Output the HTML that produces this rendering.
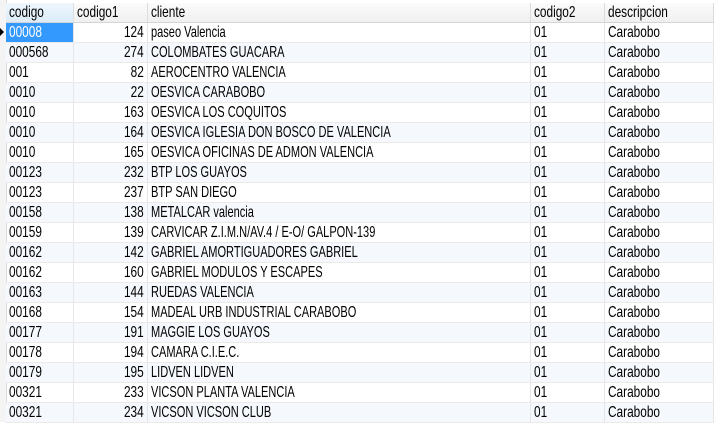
<html><head><style>
body{margin:0;width:726px;height:427px;background:#fff;font-family:"Liberation Sans",sans-serif;font-size:11.5px;color:#000;overflow:hidden;position:relative}
table{position:absolute;left:6px;top:3px;border-collapse:collapse;table-layout:fixed}
td,th{height:19px;padding:0 3px;border-right:1px solid #e6e6e6;border-bottom:1px solid #eaeaea;white-space:nowrap;overflow:hidden;line-height:19px}
th{font-weight:normal;text-align:left;background:linear-gradient(#fbfbfb,#f0f0f0);border-bottom:1px solid #d5d5d5;border-right:1px solid #dcdcdc;height:18px}
th.sel{background:linear-gradient(#eef7fd,#dcecf8)}
tr:nth-child(odd) td{background:#f5f8fc}
td.r{text-align:right}
td.s{background:#3399ff!important;color:#fff}
span{display:inline-block;transform:scaleX(.74);transform-origin:left center}
td:nth-child(3) span{transform:scaleX(.69)}
td.r span{transform-origin:right center}
.ind{position:absolute;left:0;top:0;width:6px;height:422px;background:#f4f4f4;border-right:1px solid #dcdcdc}
.arr{position:absolute;left:0;top:28px;width:0;height:0;border-left:4px solid #000;border-top:4px solid transparent;border-bottom:4px solid transparent}
</style></head><body>
<div class="ind"></div><div class="arr"></div>
<table>
<colgroup><col style="width:67px"><col style="width:74px"><col style="width:383px"><col style="width:74px"><col style="width:109px"></colgroup>
<tr><th class="sel"><span>codigo</span></th><th><span>codigo1</span></th><th><span>cliente</span></th><th><span>codigo2</span></th><th><span>descripcion</span></th></tr>
<tr><td class="s"><span>00008</span></td><td class="r"><span>124</span></td><td><span>paseo Valencia</span></td><td><span>01</span></td><td><span>Carabobo</span></td></tr>
<tr><td><span>000568</span></td><td class="r"><span>274</span></td><td><span>COLOMBATES GUACARA</span></td><td><span>01</span></td><td><span>Carabobo</span></td></tr>
<tr><td><span>001</span></td><td class="r"><span>82</span></td><td><span>AEROCENTRO VALENCIA</span></td><td><span>01</span></td><td><span>Carabobo</span></td></tr>
<tr><td><span>0010</span></td><td class="r"><span>22</span></td><td><span>OESVICA CARABOBO</span></td><td><span>01</span></td><td><span>Carabobo</span></td></tr>
<tr><td><span>0010</span></td><td class="r"><span>163</span></td><td><span>OESVICA LOS COQUITOS</span></td><td><span>01</span></td><td><span>Carabobo</span></td></tr>
<tr><td><span>0010</span></td><td class="r"><span>164</span></td><td><span>OESVICA IGLESIA DON BOSCO DE VALENCIA</span></td><td><span>01</span></td><td><span>Carabobo</span></td></tr>
<tr><td><span>0010</span></td><td class="r"><span>165</span></td><td><span>OESVICA OFICINAS DE ADMON VALENCIA</span></td><td><span>01</span></td><td><span>Carabobo</span></td></tr>
<tr><td><span>00123</span></td><td class="r"><span>232</span></td><td><span>BTP LOS GUAYOS</span></td><td><span>01</span></td><td><span>Carabobo</span></td></tr>
<tr><td><span>00123</span></td><td class="r"><span>237</span></td><td><span>BTP SAN DIEGO</span></td><td><span>01</span></td><td><span>Carabobo</span></td></tr>
<tr><td><span>00158</span></td><td class="r"><span>138</span></td><td><span>METALCAR valencia</span></td><td><span>01</span></td><td><span>Carabobo</span></td></tr>
<tr><td><span>00159</span></td><td class="r"><span>139</span></td><td><span>CARVICAR Z.I.M.N/AV.4 / E-O/ GALPON-139</span></td><td><span>01</span></td><td><span>Carabobo</span></td></tr>
<tr><td><span>00162</span></td><td class="r"><span>142</span></td><td><span>GABRIEL AMORTIGUADORES GABRIEL</span></td><td><span>01</span></td><td><span>Carabobo</span></td></tr>
<tr><td><span>00162</span></td><td class="r"><span>160</span></td><td><span>GABRIEL MODULOS Y ESCAPES</span></td><td><span>01</span></td><td><span>Carabobo</span></td></tr>
<tr><td><span>00163</span></td><td class="r"><span>144</span></td><td><span>RUEDAS VALENCIA</span></td><td><span>01</span></td><td><span>Carabobo</span></td></tr>
<tr><td><span>00168</span></td><td class="r"><span>154</span></td><td><span>MADEAL URB INDUSTRIAL CARABOBO</span></td><td><span>01</span></td><td><span>Carabobo</span></td></tr>
<tr><td><span>00177</span></td><td class="r"><span>191</span></td><td><span>MAGGIE LOS GUAYOS</span></td><td><span>01</span></td><td><span>Carabobo</span></td></tr>
<tr><td><span>00178</span></td><td class="r"><span>194</span></td><td><span>CAMARA C.I.E.C.</span></td><td><span>01</span></td><td><span>Carabobo</span></td></tr>
<tr><td><span>00179</span></td><td class="r"><span>195</span></td><td><span>LIDVEN LIDVEN</span></td><td><span>01</span></td><td><span>Carabobo</span></td></tr>
<tr><td><span>00321</span></td><td class="r"><span>233</span></td><td><span>VICSON PLANTA VALENCIA</span></td><td><span>01</span></td><td><span>Carabobo</span></td></tr>
<tr><td><span>00321</span></td><td class="r"><span>234</span></td><td><span>VICSON VICSON CLUB</span></td><td><span>01</span></td><td><span>Carabobo</span></td></tr>
</table>
</body></html>
